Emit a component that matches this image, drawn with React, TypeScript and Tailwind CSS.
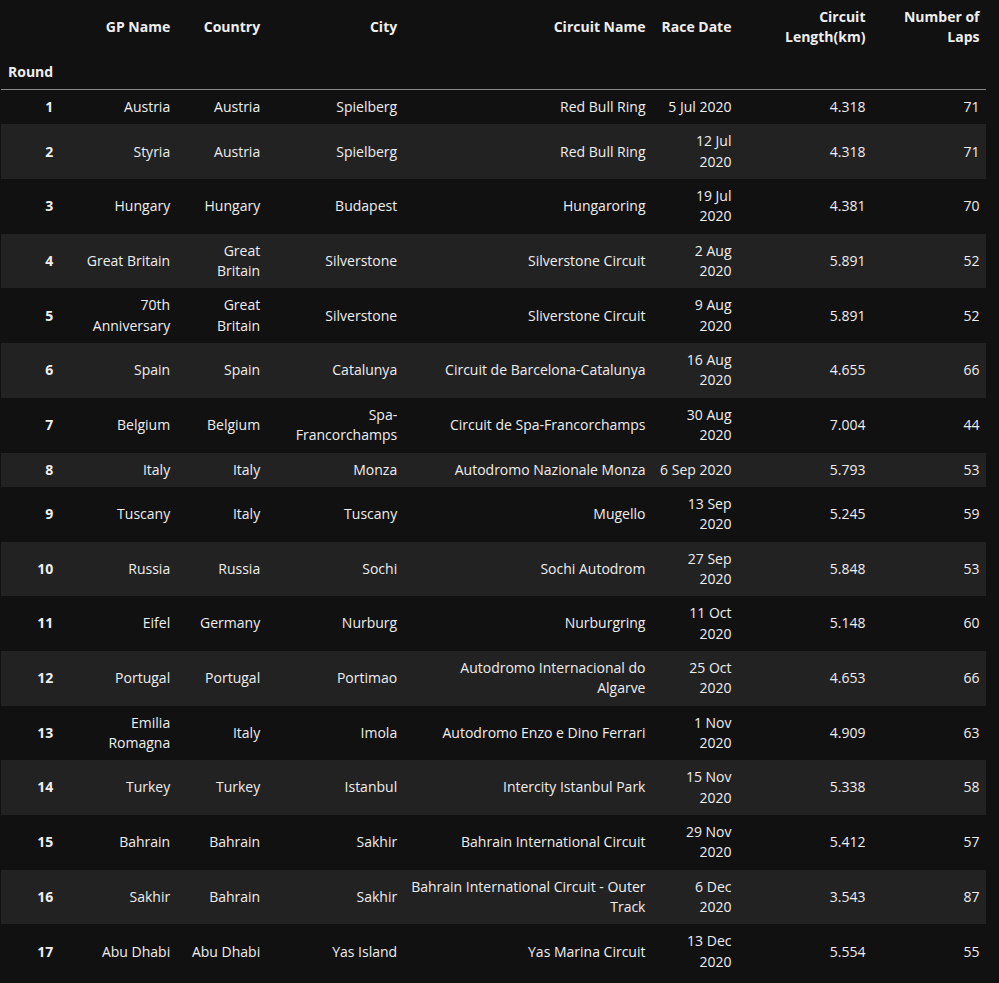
const columns = [
  { key: "gp", label: ["GP Name"], w: "w-[117px]" },
  { key: "country", label: ["Country"], w: "w-[90px]" },
  { key: "city", label: ["City"], w: "w-[137px]" },
  { key: "circuit", label: ["Circuit Name"], w: "w-[248px]" },
  { key: "date", label: ["Race Date"], w: "w-[86px]" },
  { key: "length", label: ["Circuit", "Length(km)"], w: "w-[134px]" },
  { key: "laps", label: ["Number of", "Laps"], w: "w-[114px]" },
]

type Row = {
  round: number
  gp: string[]
  country: string[]
  city: string[]
  circuit: string[]
  date: string[]
  length: string
  laps: string
}

const rows: Row[] = [
  { round: 1, gp: ["Austria"], country: ["Austria"], city: ["Spielberg"], circuit: ["Red Bull Ring"], date: ["5 Jul 2020"], length: "4.318", laps: "71" },
  { round: 2, gp: ["Styria"], country: ["Austria"], city: ["Spielberg"], circuit: ["Red Bull Ring"], date: ["12 Jul", "2020"], length: "4.318", laps: "71" },
  { round: 3, gp: ["Hungary"], country: ["Hungary"], city: ["Budapest"], circuit: ["Hungaroring"], date: ["19 Jul", "2020"], length: "4.381", laps: "70" },
  { round: 4, gp: ["Great Britain"], country: ["Great", "Britain"], city: ["Silverstone"], circuit: ["Silverstone Circuit"], date: ["2 Aug", "2020"], length: "5.891", laps: "52" },
  { round: 5, gp: ["70th", "Anniversary"], country: ["Great", "Britain"], city: ["Silverstone"], circuit: ["Sliverstone Circuit"], date: ["9 Aug", "2020"], length: "5.891", laps: "52" },
  { round: 6, gp: ["Spain"], country: ["Spain"], city: ["Catalunya"], circuit: ["Circuit de Barcelona-Catalunya"], date: ["16 Aug", "2020"], length: "4.655", laps: "66" },
  { round: 7, gp: ["Belgium"], country: ["Belgium"], city: ["Spa-", "Francorchamps"], circuit: ["Circuit de Spa-Francorchamps"], date: ["30 Aug", "2020"], length: "7.004", laps: "44" },
  { round: 8, gp: ["Italy"], country: ["Italy"], city: ["Monza"], circuit: ["Autodromo Nazionale Monza"], date: ["6 Sep 2020"], length: "5.793", laps: "53" },
  { round: 9, gp: ["Tuscany"], country: ["Italy"], city: ["Tuscany"], circuit: ["Mugello"], date: ["13 Sep", "2020"], length: "5.245", laps: "59" },
  { round: 10, gp: ["Russia"], country: ["Russia"], city: ["Sochi"], circuit: ["Sochi Autodrom"], date: ["27 Sep", "2020"], length: "5.848", laps: "53" },
  { round: 11, gp: ["Eifel"], country: ["Germany"], city: ["Nurburg"], circuit: ["Nurburgring"], date: ["11 Oct", "2020"], length: "5.148", laps: "60" },
  { round: 12, gp: ["Portugal"], country: ["Portugal"], city: ["Portimao"], circuit: ["Autodromo Internacional do", "Algarve"], date: ["25 Oct", "2020"], length: "4.653", laps: "66" },
  { round: 13, gp: ["Emilia", "Romagna"], country: ["Italy"], city: ["Imola"], circuit: ["Autodromo Enzo e Dino Ferrari"], date: ["1 Nov", "2020"], length: "4.909", laps: "63" },
  { round: 14, gp: ["Turkey"], country: ["Turkey"], city: ["Istanbul"], circuit: ["Intercity Istanbul Park"], date: ["15 Nov", "2020"], length: "5.338", laps: "58" },
  { round: 15, gp: ["Bahrain"], country: ["Bahrain"], city: ["Sakhir"], circuit: ["Bahrain International Circuit"], date: ["29 Nov", "2020"], length: "5.412", laps: "57" },
  { round: 16, gp: ["Sakhir"], country: ["Bahrain"], city: ["Sakhir"], circuit: ["Bahrain International Circuit - Outer", "Track"], date: ["6 Dec", "2020"], length: "3.543", laps: "87" },
  { round: 17, gp: ["Abu Dhabi"], country: ["Abu Dhabi"], city: ["Yas Island"], circuit: ["Yas Marina Circuit"], date: ["13 Dec", "2020"], length: "5.554", laps: "55" },
]

function Lines({ lines }: { lines: string[] }) {
  return (
    <>
      {lines.map((l, i) => (
        <div key={i}>{l}</div>
      ))}
    </>
  )
}

export default function App() {
  return (
    <div className="min-h-screen bg-[#111111] pl-px text-[14px] leading-[20.35px] text-[#eeeeee] [font-family:'Open_Sans',sans-serif]">
      <table className="table-fixed border-collapse whitespace-nowrap">
        <thead className="border-b border-[#8a8a8a] font-bold">
          <tr>
            <th className="w-[59px] px-[7px] py-[7px]"></th>
            {columns.map((c) => (
              <th key={c.key} className={`${c.w} px-[7px] py-[7px] text-right align-middle`}>
                <Lines lines={c.label} />
              </th>
            ))}
          </tr>
          <tr>
            <th className="px-[7px] py-[7px] text-left">Round</th>
            {columns.map((c) => (
              <th key={c.key} className="px-[7px] py-[7px]"></th>
            ))}
          </tr>
        </thead>
        <tbody>
          {rows.map((r, i) => (
            <tr key={r.round} className={i % 2 === 1 ? "bg-[#222222]" : ""}>
              <th className="px-[7px] py-[7px] text-right font-bold">{r.round}</th>
              <td className="px-[7px] py-[7px] text-right"><Lines lines={r.gp} /></td>
              <td className="px-[7px] py-[7px] text-right"><Lines lines={r.country} /></td>
              <td className="px-[7px] py-[7px] text-right"><Lines lines={r.city} /></td>
              <td className="px-[7px] py-[7px] text-right"><Lines lines={r.circuit} /></td>
              <td className="px-[7px] py-[7px] text-right"><Lines lines={r.date} /></td>
              <td className="px-[7px] py-[7px] text-right">{r.length}</td>
              <td className="px-[7px] py-[7px] text-right">{r.laps}</td>
            </tr>
          ))}
        </tbody>
      </table>
    </div>
  )
}
